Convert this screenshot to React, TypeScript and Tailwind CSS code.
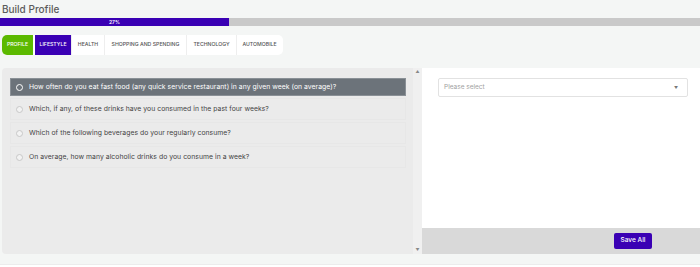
import React from "react";

const questions = [
  "How often do you eat fast food (any quick service restaurant) in any given week (on average)?",
  "Which, if any, of these drinks have you consumed in the past four weeks?",
  "Which of the following beverages do your regularly consume?",
  "On average, how many alcoholic drinks do you consume in a week?",
];

const tabs = [
  { label: "PROFILE", w: "w-[31px]", cls: "bg-[#5cb900] text-white rounded-l-[5px]" },
  { label: "LIFESTYLE", w: "w-[36px]", cls: "bg-[#3a00b4] text-white" },
  { label: "HEALTH", w: "w-[33px]", cls: "text-[#555]" },
  { label: "SHOPPING AND SPENDING", w: "w-[82px]", cls: "text-[#555]" },
  { label: "TECHNOLOGY", w: "w-[50px]", cls: "text-[#555]" },
  { label: "AUTOMOBILE", w: "w-[46px]", cls: "text-[#555]" },
];

export default function App() {
  return (
    <div
      className="w-[700px] h-[267px] bg-[#f4f6f5] overflow-hidden flex flex-col"
      style={{ fontFamily: "Inter, 'Open Sans', sans-serif" }}
    >
      <div className="h-[18px] pl-[2px] pt-[2px] text-[10px] leading-[14px] font-medium text-[#5b5b5b]">
        Build Profile
      </div>
      <div className="h-[8px] flex bg-[#c9c9c9]">
        <div className="w-[229px] h-full bg-[#3a00b4] flex items-center justify-center text-[5px] text-white font-semibold leading-none">
          27%
        </div>
      </div>
      <div className="pl-[2px] pt-[9px] h-[42px]">
        <div className="flex h-[20px] w-[281px] bg-white rounded-[5px]">
          {tabs.map((t, i) => (
            <div
              key={t.label}
              className={`${t.w} ${t.cls} flex items-center justify-center text-[5.2px] leading-none font-medium ${i > 1 ? "border-l border-[#eee]" : ""} ${i === 1 ? "ml-[2px]" : ""}`}
            >
              {t.label}
            </div>
          ))}
        </div>
      </div>
      <div className="flex h-[186px] pl-[2px]">
        <div className="w-[420px] h-full bg-[#ebebeb] rounded-l-[4px] flex">
          <div className="flex-1 pl-[8px] pt-[10px] pr-[7px] flex flex-col gap-[2px]">
            {questions.map((q, i) => (
              <div
                key={q}
                className={`flex items-center gap-[6px] pl-[5px] ${
                  i === 0
                    ? "bg-[#6c737a] text-white border border-[#8a9096] h-[18px]"
                    : "text-[#444] border border-[#e7e7e7] h-[22px]"
                }`}
              >
                <span
                  className={`w-[7px] h-[7px] rounded-full border ${i === 0 ? "border-white" : "border-[#c8c8c8] bg-[#f3f3f3]"}`}
                />
                <span className="text-[6.8px] leading-none tracking-[0.05px]">{q}</span>
              </div>
            ))}
          </div>
          <div className="w-[9px] h-full bg-[#f0f0f0] flex flex-col justify-between items-center py-[2px]">
            <span className="text-[4px] text-[#888] leading-none">▲</span>
            <span className="text-[4px] text-[#888] leading-none">▼</span>
          </div>
        </div>
        <div className="flex-1 flex flex-col">
          <div className="flex-1 bg-white pl-[16px] pr-[12px] pt-[10px]">
            <div className="h-[19px] border border-[#e2e2e2] rounded-[2px] flex items-center justify-between pl-[5px] pr-[9px]">
              <span className="text-[6.5px] text-[#a0a0a0]">Please select</span>
              <span className="text-[4px] text-[#777]">▼</span>
            </div>
          </div>
          <div className="h-[26px] bg-[#d9d9d9] flex items-center justify-end pr-[48px]">
            <div className="w-[38px] h-[16px] bg-[#3a00b4] rounded-[2px] flex items-center justify-center text-white text-[6.5px] font-medium">
              Save All
            </div>
          </div>
        </div>
      </div>
      <div className="h-[10px] bg-[#f4f6f5]" />
      <div className="flex-1 border-t border-[#ececec] bg-white" />
    </div>
  );
}
